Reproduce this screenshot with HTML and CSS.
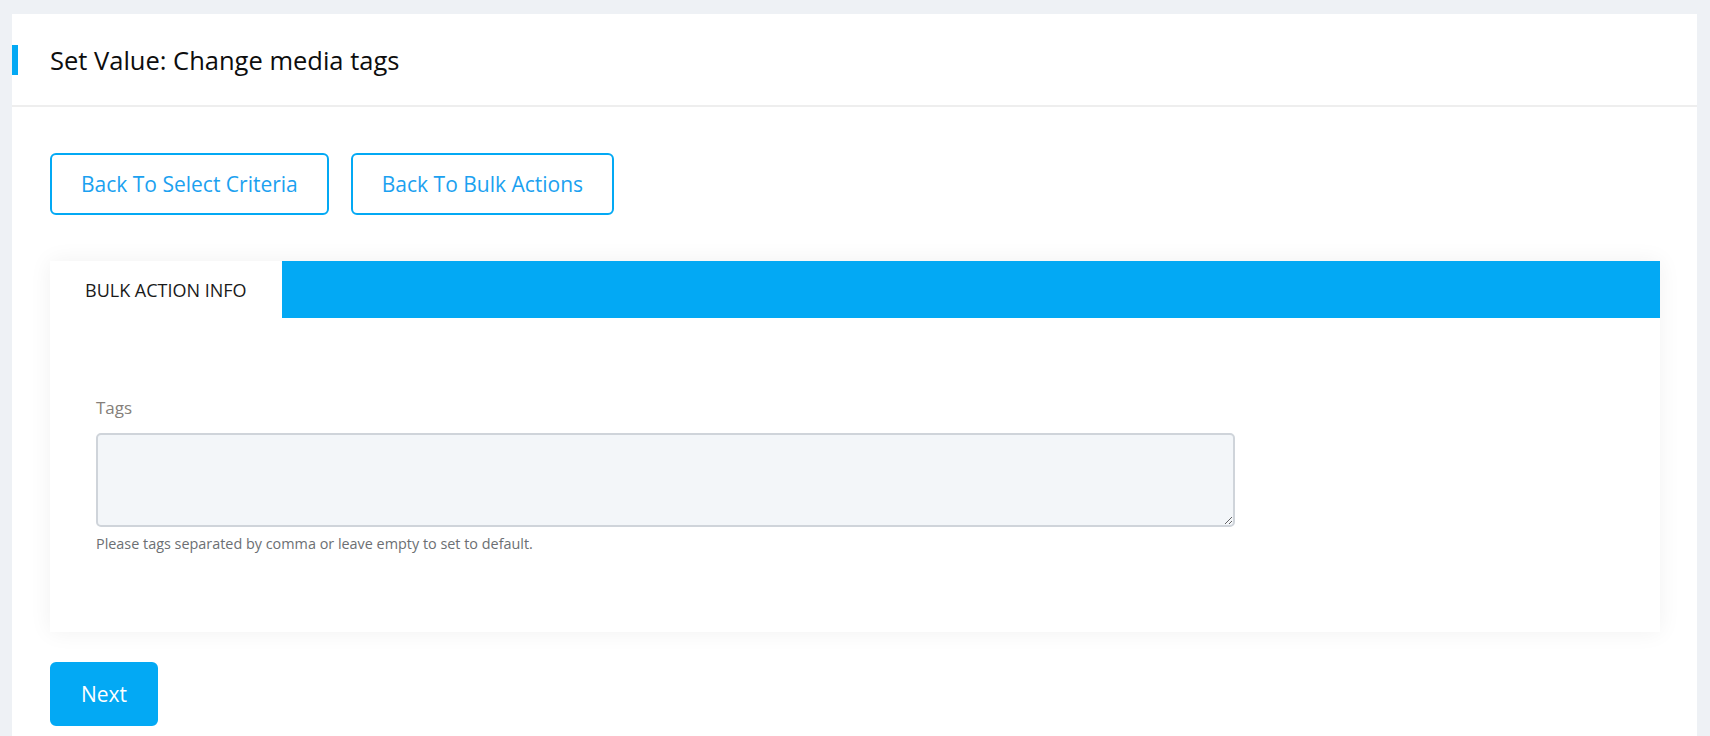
FILE: index.html
```html
<!DOCTYPE html>
<html lang="en">
<head>
<meta charset="utf-8">
<title>Set Value: Change media tags</title>
<link rel="stylesheet" href="styles.css">
</head>
<body>
<div class="card">
  <div class="card-header">
    <span class="accent"></span>
    <h1 class="title">Set Value: Change media tags</h1>
  </div>
  <div class="card-body">
    <div class="actions">
      <button class="btn btn-outline">Back To Select Criteria</button>
      <button class="btn btn-outline">Back To Bulk Actions</button>
    </div>
    <div class="panel">
      <div class="tabs">
        <div class="tab active">BULK ACTION INFO</div>
      </div>
      <div class="panel-body">
        <div class="field">
          <label class="label" for="tags">Tags</label>
          <textarea id="tags" class="textarea"></textarea>
          <div class="help">Please tags separated by comma or leave empty to set to default.</div>
        </div>
      </div>
    </div>
    <div class="footer">
      <button class="btn btn-primary">Next</button>
    </div>
  </div>
</div>
</body>
</html>
```

FILE: styles.css
```css
html, body {
  margin: 0;
  padding: 0;
}
body {
  background: #eef1f5;
  font-family: "Open Sans", "Noto Sans", sans-serif;
  padding: 14px 13px 0 12px;
  height: 736px;
  box-sizing: border-box;
  overflow: hidden;
  display: flex;
  flex-direction: column;
}
.card {
  background: #ffffff;
  flex: 1;
  overflow: hidden;
}
.card-header {
  display: flex;
  align-items: center;
  height: 91px;
  border-bottom: 2px solid #eeeeee;
}
.accent {
  width: 6px;
  height: 30px;
  background: #03a9f4;
  margin-right: 32px;
}
.title {
  margin: 0;
  font-size: 25.5px;
  font-weight: 400;
  color: #0d0d0d;
}
.card-body {
  padding: 46px 37px 0 38px;
}
.actions {
  display: flex;
  gap: 22px;
}
.btn {
  font-family: inherit;
  font-size: 21px;
  border-radius: 6px;
  border: 2px solid #03a9f4;
  cursor: pointer;
  padding: 0 29px;
  height: 62px;
}
.btn-outline {
  background: #ffffff;
  color: #1ba1f0;
}
.panel {
  margin-top: 46px;
  box-shadow: 0 0 22px rgba(0, 0, 0, 0.06);
}
.tabs {
  display: flex;
  background: #03a9f4;
  height: 57px;
}
.tab {
  display: flex;
  align-items: center;
  padding: 0 35px;
  font-size: 18px;
  color: #1a1a1a;
  background: #ffffff;
}
.panel-body {
  background: #ffffff;
  padding: 78px 46px 78px 46px;
}
.field {
  width: 75%;
}
.label {
  display: block;
  font-size: 17px;
  line-height: 24px;
  color: #857f7a;
  margin-bottom: 13px;
}
.textarea {
  display: block;
  box-sizing: border-box;
  width: 100%;
  height: 94px;
  background: #f3f6f9;
  border: 2px solid #cfd4da;
  border-radius: 5px;
  font-family: inherit;
  margin: 0;
}
.help {
  margin-top: 7px;
  font-size: 14.4px;
  line-height: 20px;
  color: #6c6f73;
}
.footer {
  margin-top: 30px;
}
.btn-primary {
  background: #03a9f4;
  color: #ffffff;
  height: 64px;
}
```
